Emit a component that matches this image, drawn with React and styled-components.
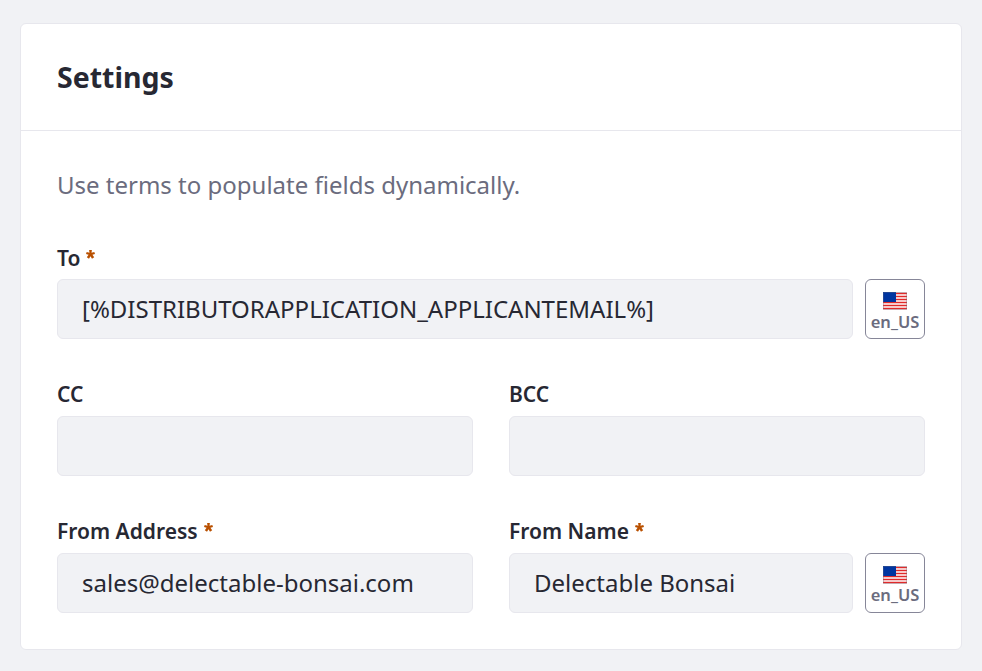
import React from "react";
import styled, { createGlobalStyle } from "styled-components";

const Global = createGlobalStyle`
  * { box-sizing: border-box; }
  body {
    margin: 0;
    background: #f1f2f5;
    color: #272833;
    font-family: "Noto Sans", "Open Sans", sans-serif;
  }
`;

const Page = styled.main`
  height: 671px;
  padding: 23px 20px 21px;
`;

const Card = styled.section`
  height: 627px;
  background: #fff;
  border: 1px solid #e7e7ed;
  border-radius: 6px;
`;

const CardHeader = styled.header`
  height: 107px;
  padding: 32px 36px 0;
  border-bottom: 1px solid #e7e7ed;
`;

const Title = styled.h2`
  margin: 0;
  font-size: 28.5px;
  line-height: 42px;
  font-weight: 700;
`;

const CardBody = styled.div`
  padding: 36px 36px 0;
`;

const Hint = styled.p`
  margin: 0 0 36px;
  font-size: 24px;
  line-height: 36px;
  color: #6b6c7e;
`;

const Row = styled.div`
  display: grid;
  grid-template-columns: ${(p) =>
    p.$split ? "repeat(2, minmax(0, 1fr))" : "minmax(0, 1fr)"};
  column-gap: 36px;
  height: 137px;
`;

const Label = styled.label`
  display: flex;
  align-items: flex-start;
  height: 40px;
  padding-top: ${(p) => (p.$lead ? "3px" : "2px")};
  font-size: 21px;
  line-height: 32px;
  font-weight: 600;
`;

const Asterisk = styled.svg`
  width: 9px;
  height: 9px;
  margin: 8px 0 0 6px;
  fill: #b95000;
`;

const InputGroup = styled.div`
  display: flex;
  gap: 12px;
`;

const Input = styled.input`
  flex: 1;
  min-width: 0;
  height: 60px;
  padding: 0 24px 2px;
  border: 1px solid #e7e7ed;
  border-radius: 6px;
  background: #f1f2f5;
  color: #272833;
  font: 400 24px/36px "Noto Sans", "Open Sans", sans-serif;
  outline: none;
`;

const LocaleButton = styled.button`
  display: flex;
  flex-direction: column;
  align-items: center;
  width: 60px;
  height: 60px;
  padding: 12px 0 0;
  border: 1px solid #868698;
  border-radius: 6px;
  background: #fff;
  color: #6b6c7e;
  font: 600 16.5px/20px "Noto Sans", "Open Sans", sans-serif;
  white-space: nowrap;
`;

const FlagIcon = styled.svg`
  display: block;
  width: 24px;
  height: 18px;
  margin-bottom: ${(p) => (p.$lead ? "2px" : "1px")};
  flex: none;
`;

function Flag({ lead }) {
  return (
    <FlagIcon viewBox="0 0 24 18" $lead={lead}>
      <path fill="#fff" d="M0 0h24v18H0z" />
      <path
        fill="#e02a2a"
        d="M0 .8h24v1.4H0zM0 3.8h24v1.4H0zM0 6.8h24v1.4H0zM0 9.8h24v1.4H0zM0 12.8h24v1.4H0zM0 15.8h24v1.4H0z"
      />
      <path fill="#0035a0" d="M0 0h13v10H0z" />
      <path fill="none" stroke="#6b6c7e" strokeOpacity=".35" d="M.5.5h23v17H.5z" />
    </FlagIcon>
  );
}

function Field({ label, value = "", required, localized, lead }) {
  return (
    <div>
      <Label $lead={lead}>
        {label}
        {required && (
          <Asterisk viewBox="0 0 9 9">
            <path d="M3.1 0h2.8l-.4 2.7 2.8-.8.7 2.2-2.6.7 1.8 2.4L6 8.8 4.5 6.2 3 8.8.8 7.2l1.8-2.4L0 4.1l.7-2.2 2.8.8z" />
          </Asterisk>
        )}
      </Label>
      <InputGroup>
        <Input aria-label={label} defaultValue={value} />
        {localized && (
          <LocaleButton type="button">
            <Flag lead={lead} />
            en_US
          </LocaleButton>
        )}
      </InputGroup>
    </div>
  );
}

export default function App() {
  return (
    <Page>
      <Global />
      <Card>
        <CardHeader>
          <Title>Settings</Title>
        </CardHeader>
        <CardBody>
          <Hint>Use terms to populate fields dynamically.</Hint>
          <Row>
            <Field
              label="To"
              value="[%DISTRIBUTORAPPLICATION_APPLICANTEMAIL%]"
              required
              localized
              lead
            />
          </Row>
          <Row $split>
            <Field label="CC" />
            <Field label="BCC" />
          </Row>
          <Row $split>
            <Field label="From Address" value="sales@delectable-bonsai.com" required />
            <Field label="From Name" value="Delectable Bonsai" required localized />
          </Row>
        </CardBody>
      </Card>
    </Page>
  );
}
